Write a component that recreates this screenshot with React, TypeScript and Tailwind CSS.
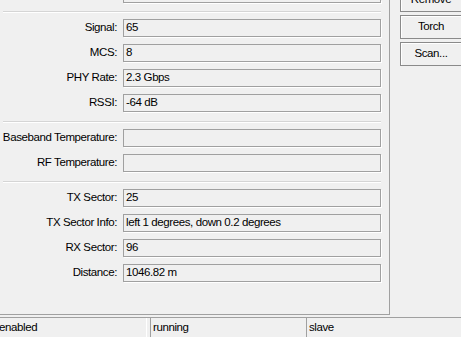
const groups: { label: string; value: string }[][] = [
  [
    { label: 'Signal:', value: '65' },
    { label: 'MCS:', value: '8' },
    { label: 'PHY Rate:', value: '2.3 Gbps' },
    { label: 'RSSI:', value: '-64 dB' },
  ],
  [
    { label: 'Baseband Temperature:', value: '' },
    { label: 'RF Temperature:', value: '' },
  ],
  [
    { label: 'TX Sector:', value: '25' },
    { label: 'TX Sector Info:', value: 'left 1 degrees, down 0.2 degrees' },
    { label: 'RX Sector:', value: '96' },
    { label: 'Distance:', value: '1046.82 m' },
  ],
];

const Separator = ({ first }: { first: boolean }) => (
  <div
    className={`${first ? 'mt-[8px]' : 'mt-[9px]'} mb-[6px] ml-[3px] h-[2px] w-[378px] border-t border-b border-t-[#d5d5d5] border-b-white`}
  />
);

const Field = ({ label, value }: { label: string; value: string }) => (
  <div className="flex items-center">
    <div className="w-[117px] text-right whitespace-nowrap">{label}</div>
    <div className="ml-[6px] flex h-[18px] w-[258px] items-center border border-[#a0a0a0] pl-[2px] whitespace-nowrap shadow-[1px_1px_0_#fff]">
      {value}
    </div>
  </div>
);

const Button = ({ label, className = '' }: { label: string; className?: string }) => (
  <div
    className={`flex h-[24px] w-[62px] items-center justify-center border border-[#8a8a8a] shadow-[inset_1px_1px_0_#fff] ${className}`}
  >
    {label}
  </div>
);

export default function App() {
  return (
    <div className="flex h-[337px] w-[461px] flex-col overflow-hidden bg-[#f0f0f0] font-['Liberation_Sans',Arial,sans-serif] text-[11.5px] tracking-[-0.4px] text-black">
      <div className="flex h-[317px] shrink-0">
        <div className="h-[315px] w-[390px] shrink-0 border-r border-b border-[#a0a0a0]">
          <div className="ml-[123px] h-[3px] w-[258px] border-x border-b border-[#a0a0a0] shadow-[1px_1px_0_#fff]" />
          {groups.map((rows, i) => (
            <div key={i}>
              <Separator first={i === 0} />
              <div className="flex flex-col gap-[7px]">
                {rows.map((r) => (
                  <Field key={r.label} label={r.label} value={r.value} />
                ))}
              </div>
            </div>
          ))}
        </div>
        <div className="ml-[10px] flex flex-col gap-[3px]">
          <Button label="Remove" className="-mt-[12px]" />
          <Button label="Torch" />
          <Button label="Scan..." />
        </div>
      </div>
      <div className="flex h-[20px] shrink-0 gap-[3px] border-t border-[#a0a0a0]">
        <div className="-ml-[4px] flex w-[151px] items-center border-r border-white pl-[3px]">enabled</div>
        <div className="flex w-[153px] items-center border-l border-[#a0a0a0] pl-[2px]">running</div>
        <div className="flex flex-1 items-center border-l border-[#a0a0a0] pl-[2px]">slave</div>
      </div>
    </div>
  );
}
